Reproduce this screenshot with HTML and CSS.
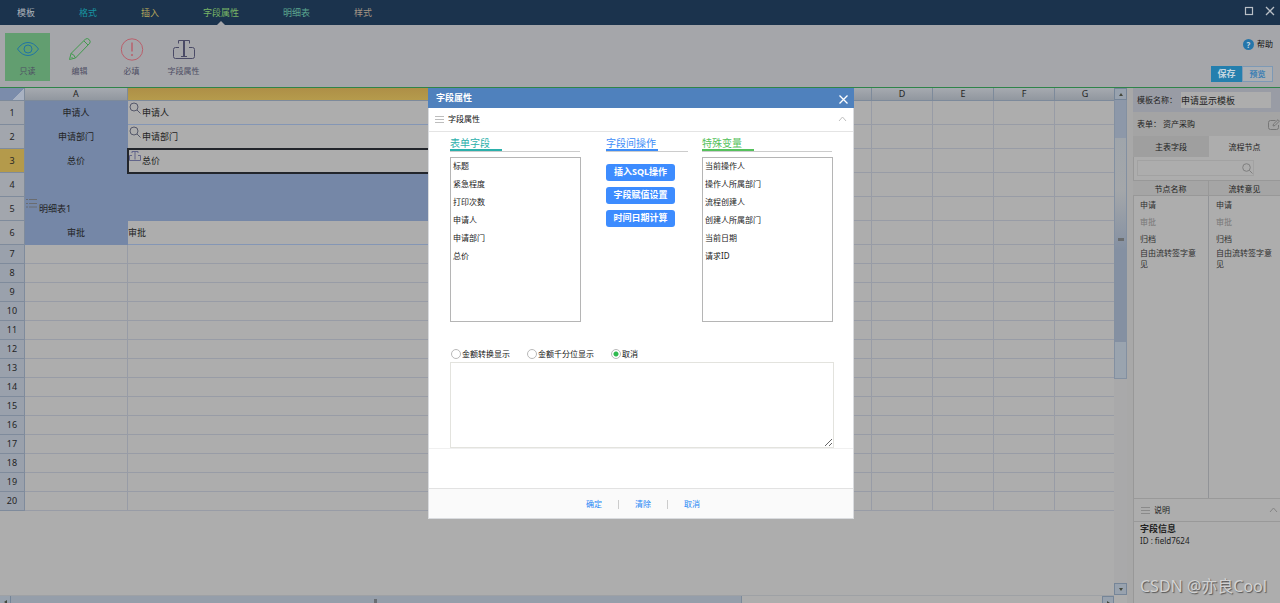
FILE: index.html
```html
<!DOCTYPE html>
<html lang="zh-CN">
<head>
<meta charset="utf-8">
<meta name="viewport" content="width=device-width, initial-scale=1">
<title>字段属性</title>
<link rel="stylesheet" href="styles.css">
</head>
<body>
<div class="app">
  <header class="titlebar">
    <nav class="menu">
      <a class="menu-item c-plain" href="#">模板</a>
      <a class="menu-item c-cyan" href="#">格式</a>
      <a class="menu-item c-yellow" href="#">插入</a>
      <a class="menu-item c-green active" href="#">字段属性</a>
      <a class="menu-item c-mint" href="#">明细表</a>
      <a class="menu-item c-sand" href="#">样式</a>
    </nav>
    <div class="window-buttons">
      <button type="button" aria-label="最大化"><svg width="10" height="10" viewBox="0 0 10 10"><rect x="1.5" y="1.5" width="7" height="7" fill="none" stroke="#b9bfc6" stroke-width="1.2"/></svg></button>
      <button type="button" aria-label="关闭窗口"><svg width="10" height="10" viewBox="0 0 10 10"><path d="M1 1l8 8M9 1l-8 8" stroke="#b9bfc6" stroke-width="1.3"/></svg></button>
    </div>
  </header>

  <div class="ribbon">
    <div class="tools">
      <button class="tool selected" type="button">
        <svg width="24" height="24" viewBox="0 0 24 24" fill="none" stroke="#1f74a5"><path d="M1.5 12Q6 5.500 12 5.500T22.500 12Q18 18.500 12 18.500T1.500 12z"/><circle cx="12" cy="12" r="4"/></svg>
        <span>只读</span>
      </button>
      <button class="tool" type="button">
        <svg width="24" height="24" viewBox="0 0 24 24" fill="none" stroke="#419a4d"><path d="M1.500 22.500l1.500-6L17.500 2q2-1.200 3.700.6t.6 3.600L7.500 21zM3 16.500q3 .5 4.500 4.500M16 4l4 4M3.500 20l1.500 1.500"/></svg>
        <span>编辑</span>
      </button>
      <button class="tool" type="button">
        <svg width="24" height="24" viewBox="0 0 24 24" fill="none" stroke="#b9606c"><circle cx="12" cy="12.500" r="10.700"/><path d="M12 5.500v9" stroke-width="1.500"/><circle cx="12" cy="18" r=".7"/></svg>
        <span>必填</span>
      </button>
      <button class="tool" type="button">
        <svg width="24" height="24" viewBox="0 0 24 24" fill="none" stroke="#4a4a66"><path d="M6.500 6.500v-3h11v3M11.500 3.500v15.500M12.500 3.500v15.500M9 19.500h6M7 10.500H3.500q-2 0-2 2v7q0 2 2 2h17q2 0 2-2v-7q0-2-2-2H17"/></svg>
        <span>字段属性</span>
      </button>
    </div>
    <div class="ribbon-side">
      <a class="help" href="#"><span class="help-mark">?</span>帮助</a>
      <div class="actions">
        <button class="save" type="button">保存</button>
        <button class="preview" type="button">预览</button>
      </div>
    </div>
  </div>

  <main class="work">
    <section class="sheet">
      <div class="canvas">
        <table class="grid">
          <colgroup><col class="col-num"><col class="col-a"><col><col class="col-s"><col class="col-s"><col class="col-s"><col class="col-s"><col class="col-s"></colgroup>
          <thead>
            <tr><th class="corner"></th><th>A</th><th class="current" aria-label="B"></th><th aria-label="C"></th><th>D</th><th>E</th><th>F</th><th>G</th></tr>
          </thead>
          <tbody>
            <tr class="tall"><th>1</th><td class="label">申请人</td><td class="field"><svg class="mark" width="12" height="12" viewBox="0 0 12 12" fill="none" stroke="#55586a"><circle cx="5" cy="5" r="4"/><path d="M8 8l3.500 3.500"/></svg>申请人</td><td></td><td></td><td></td><td></td><td></td></tr>
            <tr class="tall"><th>2</th><td class="label">申请部门</td><td class="field"><svg class="mark" width="12" height="12" viewBox="0 0 12 12" fill="none" stroke="#55586a"><circle cx="5" cy="5" r="4"/><path d="M8 8l3.500 3.500"/></svg>申请部门</td><td></td><td></td><td></td><td></td><td></td></tr>
            <tr class="tall"><th class="current">3</th><td class="label">总价</td><td class="field chosen"><svg class="mark" width="12" height="12" viewBox="0 0 12 12" fill="none" stroke="#62658a"><path d="M3 3V1.500h6V3M6 1.500v8M3 5.500H.5v5h11v-5H9"/></svg>总价</td><td></td><td></td><td></td><td></td><td></td></tr>
            <tr class="tall"><th>4</th><td class="fill"></td><td class="fill"></td><td></td><td></td><td></td><td></td><td></td></tr>
            <tr class="tall"><th>5</th><td class="fill detail"><svg class="mark" width="11" height="10" viewBox="0 0 11 10" stroke="#6a6c70"><path d="M0 1.500h2M0 5.500h2M0 9h2M3 1.500h8M3 5.500h8M3 9h8"/></svg>明细表1</td><td class="fill"></td><td></td><td></td><td></td><td></td><td></td></tr>
            <tr class="tall"><th>6</th><td class="label">审批</td><td class="plain">审批</td><td></td><td></td><td></td><td></td><td></td></tr>
            <tr><th>7</th><td></td><td></td><td></td><td></td><td></td><td></td><td></td></tr>
            <tr><th>8</th><td></td><td></td><td></td><td></td><td></td><td></td><td></td></tr>
            <tr><th>9</th><td></td><td></td><td></td><td></td><td></td><td></td><td></td></tr>
            <tr><th>10</th><td></td><td></td><td></td><td></td><td></td><td></td><td></td></tr>
            <tr><th>11</th><td></td><td></td><td></td><td></td><td></td><td></td><td></td></tr>
            <tr><th>12</th><td></td><td></td><td></td><td></td><td></td><td></td><td></td></tr>
            <tr><th>13</th><td></td><td></td><td></td><td></td><td></td><td></td><td></td></tr>
            <tr><th>14</th><td></td><td></td><td></td><td></td><td></td><td></td><td></td></tr>
            <tr><th>15</th><td></td><td></td><td></td><td></td><td></td><td></td><td></td></tr>
            <tr><th>16</th><td></td><td></td><td></td><td></td><td></td><td></td><td></td></tr>
            <tr><th>17</th><td></td><td></td><td></td><td></td><td></td><td></td><td></td></tr>
            <tr><th>18</th><td></td><td></td><td></td><td></td><td></td><td></td><td></td></tr>
            <tr><th>19</th><td></td><td></td><td></td><td></td><td></td><td></td><td></td></tr>
            <tr><th>20</th><td></td><td></td><td></td><td></td><td></td><td></td><td></td></tr>
          </tbody>
        </table>
      </div>
      <div class="vscroll">
        <span class="scroll-end"><i class="tri up"></i></span>
        <div class="vtrack"><div class="vthumb"><i class="vgrip"></i></div></div>
        <span class="scroll-end last"><i class="tri down"></i></span>
      </div>
      <div class="hscroll">
        <span class="hend"><i class="tri left"></i></span>
        <div class="htrack"><div class="hthumb"><i class="hgrip"></i></div></div>
        <span class="hend boxed"><i class="tri right"></i></span>
      </div>
    </section>

    <aside class="panel">
      <div class="name-row">
        <label for="tpl">模板名称：</label>
        <input id="tpl" type="text" value="申请显示模板">
      </div>
      <div class="form-row">
        <span>表单： 资产采购</span>
        <svg width="12" height="11" viewBox="0 0 12 11" fill="none" stroke="#777"><path d="M7.500 1.500h-5q-2 0-2 2v5q0 2 2 2h6q2 0 2-2V6M5 7l.5-2L10 .7l1.400 1.400L7 6.500z"/></svg>
      </div>
      <div class="tabs">
        <button type="button">主表字段</button>
        <button class="on" type="button">流程节点</button>
      </div>
      <div class="search">
        <input type="text" aria-label="搜索">
        <svg class="search-icon" width="11" height="11" viewBox="0 0 11 11" fill="none" stroke="#7f7f7f"><circle cx="4.500" cy="4.500" r="3.800"/><path d="M7.300 7.300L10.500 10.500"/></svg>
      </div>
      <table class="nodes">
        <thead><tr><th>节点名称</th><th>流转意见</th></tr></thead>
        <tbody>
          <tr><td>申请</td><td>申请</td></tr>
          <tr class="dim"><td>审批</td><td>审批</td></tr>
          <tr><td>归档</td><td>归档</td></tr>
          <tr class="wrap"><td>自由流转签字意见</td><td>自由流转签字意见</td></tr>
        </tbody>
      </table>
      <div class="note-head">
        <svg width="9" height="9" viewBox="0 0 9 9" stroke="#8a8a8a"><path d="M0 1.500h9M0 4.500h9M0 7.500h9"/></svg>
        <span>说明</span>
        <svg width="9" height="6" viewBox="0 0 9 6" fill="none" stroke="#858585"><path d="M1 5l3.500-4L8 5"/></svg>
      </div>
      <div class="note">
        <strong>字段信息</strong>
        <span>ID : field7624</span>
        <p class="watermark">CSDN @亦良Cool</p>
      </div>
    </aside>
  </main>
</div>

<div class="overlay">
  <div class="dialog" role="dialog" aria-labelledby="dlg-title">
    <div class="dialog-title">
      <h2 id="dlg-title">字段属性</h2>
      <button type="button" aria-label="关闭"><svg width="9" height="9" viewBox="0 0 9 9"><path d="M.5.5l8 8M8.500.5l-8 8" stroke="#fff" stroke-width="1.300"/></svg></button>
    </div>
    <div class="section-head">
      <svg width="9" height="9" viewBox="0 0 9 9" stroke="#bdbdbd"><path d="M0 1.500h9M0 4.500h9M0 7.500h9"/></svg>
      <h3>字段属性</h3>
      <svg width="9" height="6" viewBox="0 0 9 6" fill="none" stroke="#c0c0c0"><path d="M1 5l3.500-4L8 5"/></svg>
    </div>
    <div class="dialog-body">
      <div class="columns">
        <div class="column">
          <div class="heading"><label class="teal" for="fields">表单字段</label></div>
          <select id="fields" size="9">
            <option>标题</option><option>紧急程度</option><option>打印次数</option><option>申请人</option><option>申请部门</option><option>总价</option>
          </select>
        </div>
        <div class="column middle">
          <div class="heading"><span class="blue">字段间操作</span></div>
          <div class="ops">
            <button type="button">插入SQL操作</button>
            <button type="button">字段赋值设置</button>
            <button type="button">时间日期计算</button>
          </div>
        </div>
        <div class="column">
          <div class="heading"><label class="green" for="vars">特殊变量</label></div>
          <select id="vars" size="9">
            <option>当前操作人</option><option>操作人所属部门</option><option>流程创建人</option><option>创建人所属部门</option><option>当前日期</option><option>请求ID</option>
          </select>
        </div>
      </div>
      <div class="radios">
        <label><input type="radio" name="fmt">金额转换显示</label>
        <label><input type="radio" name="fmt">金额千分位显示</label>
        <label><input type="radio" name="fmt" checked>取消</label>
      </div>
      <textarea aria-label="表达式"></textarea>
    </div>
    <div class="dialog-space"></div>
    <div class="dialog-foot">
      <button type="button">确定</button><i></i><button type="button">清除</button><i></i><button type="button">取消</button>
    </div>
  </div>
</div>
</body>
</html>
```
FILE: styles.css
```css
* { box-sizing: border-box; }
body {
  margin: 0;
  overflow: hidden;
  background: #adadad;
  color: #222;
  font: 8px/12px "Noto Sans", "Noto Sans CJK SC", sans-serif;
}
button, input, select, textarea {
  margin: 0;
  padding: 0;
  border: 0;
  border-radius: 0;
  background: none;
  color: inherit;
  font: inherit;
}
a { color: inherit; text-decoration: none; }
h2, h3, p { margin: 0; }
svg { flex: none; }
.app { display: flex; flex-direction: column; height: 100vh; }

/* title bar */
.titlebar {
  display: flex;
  justify-content: space-between;
  height: 25px;
  flex: none;
  background: #1b334d;
}
.menu { display: flex; gap: 44px; padding-left: 17px; }
.menu-item { position: relative; font-size: 9px; line-height: 26px; }
.menu-item.active::after {
  content: "";
  position: absolute;
  left: 50%;
  bottom: 0;
  margin-left: -4px;
  border: 4px solid transparent;
  border-top: 0;
  border-bottom-color: #a5a6aa;
}
.c-plain { color: #adb3ba; }
.c-cyan { color: #1795a2; }
.c-yellow { color: #b3a65c; }
.c-green { color: #79b566; }
.c-mint { color: #5ba790; }
.c-sand { color: #a39584; }
.window-buttons { display: flex; align-items: center; gap: 11px; padding: 0 5px 4px 0; }
.window-buttons button { display: flex; }

/* ribbon */
.ribbon {
  display: flex;
  justify-content: space-between;
  height: 63px;
  flex: none;
  border-bottom: 1px solid #2f8449;
  background: #a5a6aa;
}
.tools { display: flex; gap: 7px; padding: 8px 5px; }
.tool {
  display: flex;
  flex-direction: column;
  align-items: center;
  gap: 4px;
  width: 45px;
  height: 48px;
  padding-top: 4px;
  color: #4d4d63;
  white-space: nowrap;
}
.tool.selected { background: #629e70; }
.ribbon-side {
  display: flex;
  flex-direction: column;
  align-items: flex-end;
  gap: 16px;
  padding: 13px 7px 0 0;
}
.help { display: flex; align-items: center; gap: 3px; color: #111; }
.help-mark {
  width: 11px;
  height: 11px;
  border-radius: 50%;
  background: #2475aa;
  color: #c4d4df;
  font-weight: bold;
  line-height: 11px;
  text-align: center;
}
.actions { display: flex; }
.actions button { width: 31px; height: 16px; border: 1px solid #247fae; font-weight: bold; line-height: 14px; }
.actions .save { background: #247fae; color: #c3d5df; font-size: 9px; }
.actions .preview { border-color: #7d99b5; background: #acafb3; color: #3c7fb4; }

/* spreadsheet */
.work { display: flex; flex: 1; min-height: 0; }
.sheet {
  display: grid;
  grid-template: minmax(0, 1fr) 8px / minmax(0, 1fr) 13px;
  flex: 1;
  min-width: 0;
}
.canvas { overflow: hidden; }
.grid {
  width: calc(100% + 2px);
  table-layout: fixed;
  border-collapse: separate;
  border-spacing: 0;
  font-size: 9px;
}
.col-num { width: 25px; }
.col-a { width: 103px; }
.col-s { width: 61px; }
.grid th, .grid td { height: 19px; padding: 0; border: solid #989ca6; border-width: 0 1px 1px 0; }
.grid .tall th, .grid .tall td { height: 24px; }
.grid th { color: #252525; font-weight: normal; }
.grid thead th {
  height: 13px;
  border-color: #7d8a9b;
  background: linear-gradient(#a6aab0, #91979f);
  line-height: 12px;
}
.grid thead th.current { background: linear-gradient(#ae8f47, #b59b4c); }
.grid thead th.corner { background: linear-gradient(135deg, #7b8cab 67%, #a9b2c2 68%); }
.grid tbody th { border-color: #7f8b9c; background: #9aa1ac; }
.grid tbody .tall th { background: #a2a6ad; }
.grid tbody .tall th.current { background: #b49a4b; }
.grid td.label, .grid td.fill { border-color: #7587a7; background: #7587a7; }
.grid td.label { text-align: center; }
.grid td.field, .grid td.plain { border-bottom-color: #8496b5; }
.grid td.field, .grid td.detail { position: relative; padding-left: 14px; }
.grid td.chosen { outline: 2px solid #22252b; outline-offset: -1px; }
.mark { position: absolute; left: 1px; top: 1px; }

.scroll-end, .hend {
  display: flex;
  align-items: center;
  justify-content: center;
  flex: none;
  width: 13px;
  height: 12px;
  border: 1px solid #758598;
  background: #98a2ae;
}
.tri { width: 0; height: 0; border: 2px solid transparent; }
.tri.up { border-top: 0; border-bottom: 3px solid #44483c; }
.tri.down { border-bottom: 0; border-top: 3px solid #44483c; }
.tri.left { border-left: 0; border-right: 3px solid #44483c; }
.tri.right { border-right: 0; border-left: 3px solid #44483c; }
.vscroll { display: flex; flex-direction: column; background: #a9a9aa; }
.last { margin-top: auto; }
.vtrack { height: 55%; border: solid #8390a1; border-width: 0 1px 1px; background: #9aa4af; }
.vthumb {
  display: flex;
  align-items: center;
  justify-content: center;
  height: 87%;
  padding-top: 38px;
  background: linear-gradient(#8d98a9 38px, #9fa5ab 38px, #a4a7aa 90px, #8490a2 150px);
}
.vgrip { width: 6px; height: 3px; background: #6a6d6f; }
.hscroll { display: flex; grid-column: 1; overflow: hidden; border-top: 1px solid #9ea1a5; }
.hend { width: 11px; border-width: 0 1px 0 0; }
.hend.boxed { width: 12px; border-width: 1px 1px 0; }
.htrack { flex: 1; }
.hthumb {
  display: flex;
  align-items: flex-end;
  justify-content: center;
  width: 67%;
  height: 8px;
  border-right: 1px solid #7c8a9a;
  background: #959eaa;
}
.hgrip { width: 3px; height: 5px; background: #696d72; }

/* side panel */
.panel {
  display: flex;
  flex-direction: column;
  flex: none;
  width: 153px;
  border-left: 6px solid #a8a8a8;
  box-shadow: inset 1px 0 #989898;
}
.name-row { display: flex; align-items: center; height: 24px; padding: 0 9px 0 4px; background: #999ca5; }
.name-row label { white-space: nowrap; width: 44px; }
.name-row input { flex: 1; min-width: 0; height: 16px; background: #adadad; font-size: 9px; }
.form-row {
  display: flex;
  align-items: center;
  justify-content: space-between;
  height: 24px;
  padding-left: 4px;
  background: #a4a4a4;
}
.tabs { display: grid; grid-template-columns: 76px 1fr; height: 21px; flex: none; }
.tabs button { background: #9f9f9f; }
.tabs .on { background: #adadad; }
.search { position: relative; height: 23px; padding: 3px 26px 4px 4px; }
.search input { display: block; width: 100%; height: 16px; border: 1px solid #a2a2a2; }
.search-icon { position: absolute; right: 27px; top: 6px; }
.nodes {
  flex: 1;
  display: flex;
  flex-direction: column;
  background: linear-gradient(#919397, #919397) 75px 0 / 1px 100% no-repeat;
  line-height: 11px;
}
.nodes tr { display: grid; grid-template-columns: 76px 1fr; }
.nodes th {
  height: 16px;
  padding: 0;
  border: solid #989898;
  border-width: 1px 1px 1px 0;
  background: #a5a5a5;
  font-weight: normal;
  line-height: 15px;
}
.nodes th:last-child { border-right: 0; }
.nodes td { padding: 3px 7px; color: #303030; }
.nodes tbody { display: block; }
.nodes .dim td { color: #777; }
.nodes .wrap td { padding-top: 0; }
.note-head {
  display: flex;
  align-items: center;
  gap: 4px;
  height: 24px;
  padding: 0 2px 0 8px;
  border: solid #999;
  border-width: 1px 0;
}
.note-head span { flex: 1; }
.note { display: flex; flex-direction: column; height: 81px; padding: 1px 7px; }
.note strong { font-size: 9px; }
.watermark {
  margin: auto 0 4px;
  color: #d2d2d2;
  font-size: 16px;
  line-height: 24px;
  text-shadow: 1px 1px 1px #555;
  white-space: nowrap;
}

/* dialog */
.overlay { position: fixed; inset: 0; display: flex; align-items: center; justify-content: center; }
.dialog {
  display: flex;
  flex-direction: column;
  width: 426px;
  max-width: 100%;
  border: 1px solid #d9dbde;
  border-top: 0;
  background: #fff;
  margin: 3px 0 0 2px;
}
.dialog-title {
  display: flex;
  align-items: center;
  justify-content: space-between;
  height: 20px;
  padding: 0 6px 0 8px;
  margin: 0 -1px;
  background: #4f81bd;
  color: #fff;
}
.dialog-title h2 { font-size: 9px; line-height: 20px; }
.dialog-title button { display: flex; padding-top: 3px; }
.section-head {
  display: flex;
  align-items: center;
  gap: 4px;
  height: 24px;
  padding: 0 6px;
  border-bottom: 1px solid #e4e4e4;
}
.section-head h3 { flex: 1; color: #111; font-size: 8px; font-weight: normal; }
.dialog-body { padding: 4px 19px 0 21px; }
.columns { display: flex; height: 186px; }
.column { width: 131px; }
.column.middle { width: 83px; margin: 0 13px 0 25px; }
.heading { height: 16px; border-bottom: 1px solid #ccc; margin-right: 1px; }
.heading label, .heading span {
  display: block;
  width: 52px;
  height: 15px;
  border-bottom: 2px solid;
  font-size: 10px;
  line-height: 14px;
  white-space: nowrap;
}
.teal { color: #2bb0ab; }
.blue { color: #3c8cf8; }
.green { color: #55c15c; }
.column select {
  display: block;
  width: 131px;
  height: 165px;
  margin-top: 5px;
  padding-top: 2px;
  overflow: hidden;
  border: 1px solid #b5b5b5;
  background: #fff;
  color: #222;
  outline: 0;
}
.column option { min-height: 18px; padding: 0 2px; line-height: 18px; font-size: 8px; }
.ops { display: flex; flex-direction: column; gap: 6px; padding: 12px 14px 0 0; }
.ops button {
  height: 17px;
  border-radius: 3px;
  background: #3d8cff;
  color: #fff;
  font-size: 9px;
  font-weight: bold;
  line-height: 16px;
  white-space: nowrap;
}
.radios { display: flex; gap: 17px; padding: 25px 0 1px 1px; color: #111; }
.radios label { display: flex; align-items: center; gap: 1px; height: 14px; }
.radios input {
  appearance: none;
  width: 10px;
  height: 10px;
  border: 1px solid #b9b9b9;
  border-radius: 50%;
}
.radios input:checked { background: radial-gradient(circle, #2fb94f 2px, transparent 3px); }
.dialog-body textarea {
  display: block;
  width: 100%;
  height: 86px;
  border: 1px solid #e3e3de;
  background: #fff;
}
.dialog-space { height: 40px; border-top: 1px solid #f0f0f0; }
.dialog-foot {
  display: flex;
  align-items: center;
  justify-content: center;
  gap: 16px;
  height: 30px;
  padding: 2px 0 0 4px;
  border-top: 1px solid #e2e2e2;
  background: #fafafa;
  color: #1f86f5;
}
.dialog-foot i { width: 1px; height: 9px; background: #ccc; }
```
